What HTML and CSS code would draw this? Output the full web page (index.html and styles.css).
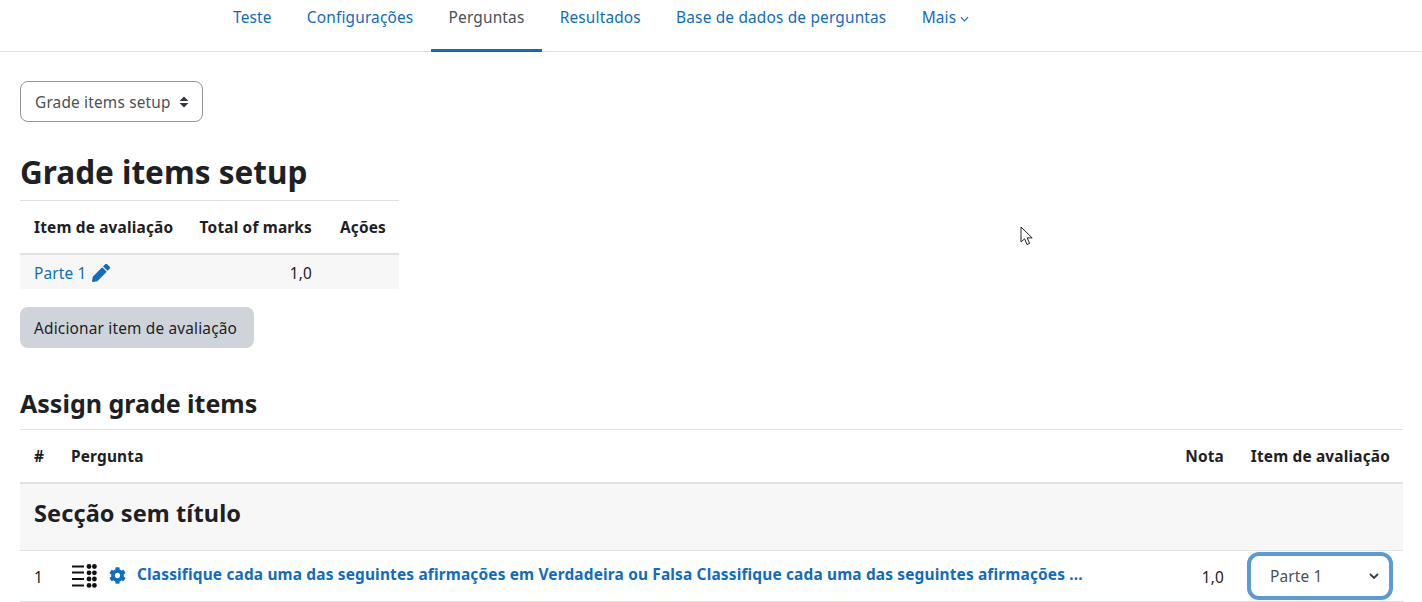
FILE: index.html
```html
<!DOCTYPE html>
<html lang="pt">
<head>
<meta charset="utf-8">
<title>Grade items setup</title>
<link rel="stylesheet" href="styles.css">
</head>
<body>
<nav class="tabs">
  <a class="tab" href="#">Teste</a>
  <a class="tab" href="#">Configurações</a>
  <a class="tab active" href="#">Perguntas</a>
  <a class="tab" href="#">Resultados</a>
  <a class="tab" href="#">Base de dados de perguntas</a>
  <a class="tab" href="#">Mais <svg class="caret" viewBox="0 0 10 6" width="9" height="6"><path d="M1 1l4 4 4-4" fill="none" stroke="currentColor" stroke-width="1.3"/></svg></a>
</nav>
<main class="content">
  <div class="picker">Grade items setup
    <svg class="updown" viewBox="0 0 10 12" width="10" height="12"><path d="M5 .5l4.5 4.5H.5zM5 11.5L.5 7h9z" fill="#343a40"/></svg>
  </div>
  <h1 class="title">Grade items setup</h1>
  <table class="grid small">
    <colgroup><col><col><col class="c-acoes"></colgroup>
    <thead><tr><th class="first">Item de avaliação</th><th class="num">Total of marks</th><th class="num">Ações</th></tr></thead>
    <tbody><tr class="shade compact">
      <td class="first"><a href="#" class="link">Parte 1</a>
        <svg class="pencil" viewBox="0 0 512 512" width="18" height="18"><path fill="#0f6cbf" d="M497.9 142.1l-46.1 46.1c-4.7 4.7-12.3 4.7-17 0l-111-111c-4.7-4.7-4.7-12.3 0-17l46.1-46.1c18.7-18.7 49.1-18.7 67.9 0l60.1 60.1c18.8 18.7 18.8 49.1 0 67.9zM284.2 99.8L21.6 362.4.4 483.9c-2.9 16.4 11.4 30.6 27.8 27.8l121.5-21.3 262.6-262.6c4.7-4.7 4.7-12.3 0-17l-111-111c-4.8-4.7-12.4-4.7-17.1 0z"/></svg>
      </td><td class="num">1,0</td><td></td>
    </tr></tbody>
  </table>
  <button class="add" type="button">Adicionar item de avaliação</button>
  <h2 class="subtitle">Assign grade items</h2>
  <table class="grid wide">
    <colgroup><col class="c-hash"><col><col class="c-nota"><col class="c-item"></colgroup>
    <thead><tr><th class="first">#</th><th>Pergunta</th><th class="num">Nota</th><th class="num">Item de avaliação</th></tr></thead>
    <tbody>
      <tr class="shade section"><td class="first" colspan="4"><h3 class="section-title">Secção sem título</h3></td></tr>
      <tr class="question">
        <td class="first cell-text">1</td>
        <td><div class="qrow">
          <svg class="qtype" viewBox="0 0 26 24" width="26" height="24"><g fill="#111"><rect x="1" y="1.5" width="12" height="2"/><rect x="1" y="7.5" width="12" height="2"/><rect x="1" y="14" width="12" height="2"/><rect x="1" y="20.5" width="12" height="2"/><circle cx="18" cy="2.5" r="2.4"/><circle cx="23.4" cy="2.5" r="2.4"/><circle cx="18" cy="8.8" r="2.4"/><circle cx="23.4" cy="8.8" r="2.4"/><circle cx="18" cy="15" r="2.4"/><circle cx="23.4" cy="15" r="2.4"/><circle cx="18" cy="21.4" r="2.4"/><circle cx="23.4" cy="21.4" r="2.4"/></g></svg>
          <svg class="gear" viewBox="0 0 512 512" width="17" height="17"><path fill="#0f6cbf" d="M487.4 315.7l-42.6-24.6c4.3-23.2 4.3-47 0-70.2l42.6-24.6c4.9-2.8 7.1-8.6 5.5-14-11.1-35.6-30-67.8-54.7-94.6-3.8-4.1-10-5.1-14.8-2.3L380.8 110c-17.9-15.4-38.5-27.3-60.8-35.1V25.8c0-5.6-3.9-10.5-9.4-11.7-36.7-8.2-74.3-7.8-109.2 0-5.5 1.2-9.4 6.1-9.4 11.7V75c-22.2 7.9-42.8 19.8-60.8 35.1L88.7 85.5c-4.9-2.8-11-1.9-14.8 2.3-24.7 26.7-43.6 58.9-54.7 94.6-1.7 5.4.6 11.2 5.5 14L67.3 221c-4.3 23.2-4.3 47 0 70.2l-42.6 24.6c-4.9 2.8-7.1 8.6-5.5 14 11.1 35.6 30 67.8 54.7 94.6 3.8 4.1 10 5.1 14.8 2.3l42.6-24.6c17.9 15.4 38.5 27.3 60.8 35.1v49.2c0 5.6 3.9 10.5 9.4 11.7 36.7 8.2 74.3 7.8 109.2 0 5.5-1.2 9.4-6.1 9.4-11.7v-49.2c22.2-7.9 42.8-19.8 60.8-35.1l42.6 24.6c4.9 2.8 11 1.9 14.8-2.3 24.7-26.7 43.6-58.9 54.7-94.6 1.5-5.5-.7-11.3-5.6-14.1zM256 336c-44.1 0-80-35.9-80-80s35.9-80 80-80 80 35.9 80 80-35.9 80-80 80z"/></svg>
          <a href="#" class="qlink">Classifique cada uma das seguintes afirmações em Verdadeira ou Falsa Classifique cada uma das seguintes afirmações ...</a>
        </div></td>
        <td class="num cell-text">1,0</td>
        <td class="num"><div class="focus-select">Parte 1
          <svg viewBox="0 0 10 6" width="10" height="6"><path d="M1 1l4 4 4-4" fill="none" stroke="#343a40" stroke-width="1.8"/></svg>
        </div></td>
      </tr>
    </tbody>
  </table>
</main>
<svg class="cursor" viewBox="0 0 13 20" width="13" height="20"><path d="M1 1v15l3.6-3.2 2.4 5.7 2.6-1.1-2.4-5.5h5z" fill="#fff" stroke="#222" stroke-width="1"/></svg>
</body>
</html>
```
FILE: styles.css
```css
* { box-sizing: border-box; }
html, body { margin: 0; height: 602px; overflow: hidden; }
body { position: relative; background: #fff; color: #1d2125; font-family: "Noto Sans", "Open Sans", sans-serif; font-size: 15.4px; letter-spacing: .18px; line-height: 22px; }
a { text-decoration: none; }

.tabs { display: flex; height: 52px; padding-left: 215.4px; border-bottom: 1px solid #dee2e6; }
.tab { display: flex; align-items: center; gap: 4px; height: 52px; padding: 0 17.6px 16px; color: #0f6cbf; }
.tab.active { color: #495057; border-bottom: 3px solid #0f6cbf; padding-bottom: 13px; }
.caret { margin-top: 2px; }

.content { padding: 29px 19px 0 20px; }
.picker { display: inline-flex; align-items: center; gap: 8px; width: 183px; height: 41px; padding: 2px 14px 0; border: 1px solid #8f959e; border-radius: 8px; color: #495057; white-space: nowrap; }
.updown { margin-top: -2px; flex: none; }
.title { margin: 31px 0 9px; font-size: 31.5px; letter-spacing: 0; line-height: 38px; font-weight: 700; }

.grid { border-collapse: collapse; border-top: 1px solid #dee2e6; }
.grid th { padding: 2px 13px 0; height: 53px; text-align: left; font-weight: 700; border-bottom: 2px solid #dee2e6; }
.grid th.num, .grid td.num { text-align: right; }
.grid td { padding: 0 13px; }
.grid .first { padding-left: 14px; }
.small { width: 379px; }
.c-acoes { width: 74px; }
.shade { background: #f7f7f8; }
.compact { height: 35px; }
.grid .compact td { padding-top: 5px; }
.link { color: #0f6cbf; }
.pencil { vertical-align: -3px; margin-left: 1px; margin-top: -4px; }

.add { display: block; margin-top: 18px; width: 234px; height: 41px; padding: 4px 0 0 14px; border: 0; border-radius: 8px; background: #ced4da; color: #1d2125; font: inherit; letter-spacing: inherit; text-align: left; }
.subtitle { margin: 37px 0 8px; font-size: 25px; letter-spacing: 0; line-height: 36px; font-weight: 700; }

.wide { width: 1383px; table-layout: fixed; }
.wide th { height: 54px; }
.c-hash { width: 38px; }
.c-nota { width: 92px; }
.c-item { width: 166px; }
.section { height: 67px; border-bottom: 1px solid #dee2e6; }
.section-title { margin: 0 0 7px; font-size: 23.5px; letter-spacing: .1px; line-height: 30px; font-weight: 700; }
.question { height: 51px; border-bottom: 1px solid #dee2e6; }
.grid .cell-text { padding-top: 4px; }
.qrow { display: flex; align-items: center; gap: 10px; white-space: nowrap; }
.qtype { flex: none; }
.gear { flex: none; margin-left: 2px; margin-right: 1px; }
.qlink { color: #0f6cbf; font-weight: 700; padding-bottom: 1px; }
.focus-select { display: flex; align-items: center; justify-content: space-between; width: 146px; height: 48px; margin-left: -3px; padding: 3px 10px 0 19px; border: 4px solid #5a9bd6; border-radius: 12px; color: #495057; text-align: left; }
.focus-select svg { margin-top: -3px; }

.cursor { position: absolute; left: 1020px; top: 226px; }
```
